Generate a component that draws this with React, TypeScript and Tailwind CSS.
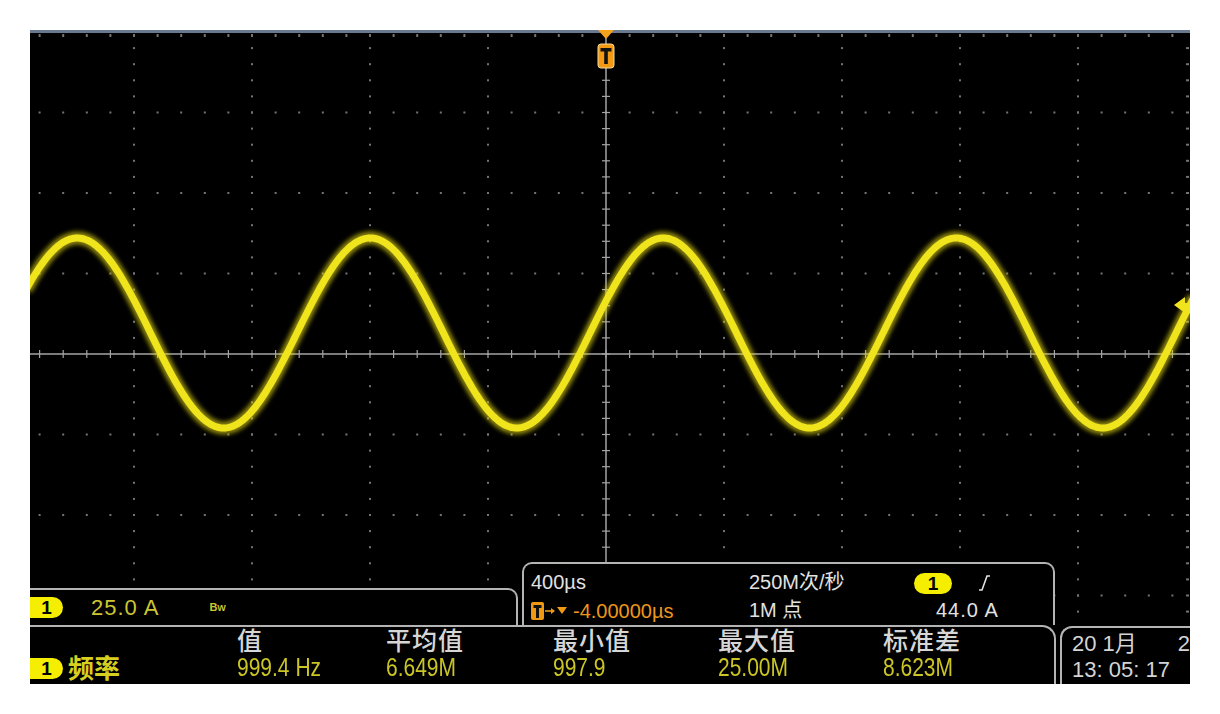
import React from "react";

const W = 1160;
const H = 654;
// graticule (screen coordinates, screen starts at 30,30 on the page)
const VX = [104, 222, 340, 458, 694, 812, 930, 1048];
const HY = [82.5, 163, 243.5, 404.5, 485, 565.5];
const CX = 576;
const CY = 324;
const MINOR_X = Array.from({ length: 51 }, (_, i) => -14 + 23.6 * i).filter((x) => x > 0 && x < W);
const MINOR_Y = Array.from({ length: 41 }, (_, j) => 2 + 16.1 * j).filter((y) => y > 4 && y < H);

function wavePath() {
  const pts: string[] = [];
  for (let x = -4; x <= W + 4; x += 2) {
    const g = x + 30;
    const y = 303 - 95 * Math.sin((2 * Math.PI * (g - 297)) / 293);
    pts.push(`${x === -4 ? "M" : "L"}${x},${y.toFixed(1)}`);
  }
  return pts.join(" ");
}

function Graticule() {
  const d = wavePath();
  return (
    <svg className="absolute inset-0" width={W} height={H} viewBox={`0 0 ${W} ${H}`}>
      <defs>
        <filter id="glow" x="-5%" y="-20%" width="110%" height="140%">
          <feGaussianBlur stdDeviation="2.2" />
        </filter>
      </defs>
      <rect x={0} y={0} width={W} height={3} fill="#6a7890" />
      {/* dotted grid lines */}
      {VX.map((x) =>
        MINOR_Y.map((y) => <rect key={`v${x}-${y}`} x={x - 1} y={y - 1} width={2} height={2} fill="#747474" />)
      )}
      {HY.map((y) =>
        MINOR_X.map((x) => <rect key={`h${x}-${y}`} x={x - 1} y={y - 1} width={2} height={2} fill="#747474" />)
      )}
      {/* top / right edge ticks */}
      {MINOR_X.map((x) => (
        <rect key={`t${x}`} x={x - 1} y={4} width={2} height={3} fill="#747474" />
      ))}
      {MINOR_Y.map((y) => (
        <rect key={`r${y}`} x={W - 4} y={y - 1} width={3} height={2} fill="#747474" />
      ))}
      {/* centre axes with ticks */}
      <line x1={0} y1={CY} x2={W} y2={CY} stroke="#a4a4a4" strokeWidth={1.5} />
      <line x1={CX} y1={0} x2={CX} y2={H} stroke="#a4a4a4" strokeWidth={1.5} />
      {MINOR_X.map((x) => (
        <line key={`cx${x}`} x1={x} y1={CY - 4} x2={x} y2={CY + 4} stroke="#a4a4a4" strokeWidth={1.2} />
      ))}
      {MINOR_Y.map((y) => (
        <line key={`cy${y}`} x1={CX - 4} y1={y} x2={CX + 4} y2={y} stroke="#a4a4a4" strokeWidth={1.2} />
      ))}
      {/* trace */}
      <path d={d} fill="none" stroke="#e8dc10" strokeOpacity={0.6} strokeWidth={13} filter="url(#glow)" />
      <path d={d} fill="none" stroke="#f0e41c" strokeWidth={7} strokeLinejoin="round" />
      {/* trigger position marker */}
      <polygon points={`${CX - 8},0 ${CX + 8},0 ${CX},9`} fill="#f4a21e" />
      <rect x={CX - 8} y={14} width={16} height={24} rx={3} fill="#f29a14" stroke="#f6d9a0" strokeWidth={1} />
      <rect x={CX - 5.5} y={18} width={11} height={3.5} fill="#111" />
      <rect x={CX - 1.8} y={21} width={3.6} height={13} fill="#111" />
      {/* trigger level marker */}
      <polygon points={`1144,275 1155,267 1155,283`} fill="#f0e41c" />
      <rect x={1154} y={273} width={6} height={4} fill="#f0e41c" />
    </svg>
  );
}

function Badge({ className = "" }: { className?: string }) {
  return (
    <div
      className={`flex items-center justify-center h-[21px] w-[33px] bg-[#f6ee00] rounded-r-full text-black font-bold text-[19px] leading-none shrink-0 ${className}`}
    >
      1
    </div>
  );
}

const sans = "font-['Liberation_Sans','Noto_Sans_CJK_SC',sans-serif]";

const columns = [
  { label: "值", value: "999.4 Hz" },
  { label: "平均值", value: "6.649M" },
  { label: "最小值", value: "997.9" },
  { label: "最大值", value: "25.00M" },
  { label: "标准差", value: "8.623M" },
];

export default function App() {
  return (
    <div className={`w-[1220px] h-[714px] bg-white pt-[30px] pl-[30px] ${sans}`}>
      <div className="relative w-[1160px] h-[654px] bg-black overflow-hidden flex flex-col justify-end">
        <Graticule />

        {/* upper info row */}
        <div className="relative flex items-end h-[63px]">
          <div className="flex items-center h-[37px] w-[488px] shrink-0 bg-black border-t-2 border-r-2 border-[#b4b4b4] rounded-tr-[10px]">
            <Badge />
            <span className="ml-[28px] text-[22px] tracking-[1px] text-[#cdc632] leading-none">25.0 A</span>
            <span className="ml-[50px] flex items-end text-[#cdc632] font-bold leading-none">
              <span className="text-[11px]">B</span>
              <span className="text-[9px]">W</span>
            </span>
          </div>
          <div className="ml-[4px] w-[533px] shrink-0 h-[63px] bg-black border-2 border-b-0 border-[#b4b4b4] rounded-t-[10px] pl-[7px] pt-[5px] grid grid-cols-[218px_165px_1fr] text-[20px] leading-[26px] text-[#e2e2e2]">
            <span>400µs</span>
            <span>250M次/秒</span>
            <span className="flex items-center gap-[26px]">
              <Badge className="rounded-l-full w-[38px]" />
              <svg width="13" height="18" viewBox="0 0 13 18">
                <path d="M1 16 H4 L9 2 H12" fill="none" stroke="#e2e2e2" strokeWidth="1.6" />
              </svg>
            </span>
            <span className="flex items-center text-[#ee961e]">
              <svg width="40" height="18" viewBox="0 0 40 18" className="mr-[2px]">
                <rect x="0" y="0" width="13" height="18" rx="2" fill="#f09a14" />
                <rect x="2.5" y="3" width="8" height="3" fill="#111" />
                <rect x="5" y="5" width="3" height="11" fill="#111" />
                <path d="M14 9 H21" stroke="#f09a14" strokeWidth="1.6" />
                <polygon points="20,6 24,9 20,12" fill="#f09a14" />
                <polygon points="26,5 36,5 31,12" fill="#f09a14" />
              </svg>
              -4.00000µs
            </span>
            <span>1M 点</span>
            <span className="pl-[22px] tracking-[1px]">44.0 A</span>
          </div>
        </div>

        {/* measurement row */}
        <div className="relative flex h-[59px]">
          <div className="w-[1026px] shrink-0 bg-black border-t-2 border-r-2 border-[#b4b4b4] rounded-tr-[14px] grid grid-cols-[207px_149px_167px_165px_165px_1fr] grid-rows-[28px_27px]">
            <span />
            {columns.map((c) => (
              <span key={c.label} className="text-[25px] leading-[28px] text-[#d6d6d6] font-medium tracking-[1px]">
                {c.label}
              </span>
            ))}
            <span className="flex items-center">
              <Badge />
              <span className="ml-[5px] text-[26px] leading-none text-[#d8d020] font-bold">频率</span>
            </span>
            {columns.map((c) => (
              <span key={c.value} className="text-[21px] leading-[26px] text-[#cbc526]">
                <span className="inline-block origin-center scale-y-120">{c.value}</span>
              </span>
            ))}
          </div>
          <div className="ml-[4px] mt-[1px] flex-1 min-w-0 bg-black border-t-2 border-l-2 border-[#b4b4b4] rounded-tl-[12px] pl-[10px] pt-[3px] text-[22px] leading-[26px] text-[#d4d4d4] whitespace-nowrap">
            <div className="flex">
              <span>20 1月</span>
              <span className="ml-[41px]">2</span>
            </div>
            <div>13: 05: 17</div>
          </div>
        </div>
      </div>
    </div>
  );
}
